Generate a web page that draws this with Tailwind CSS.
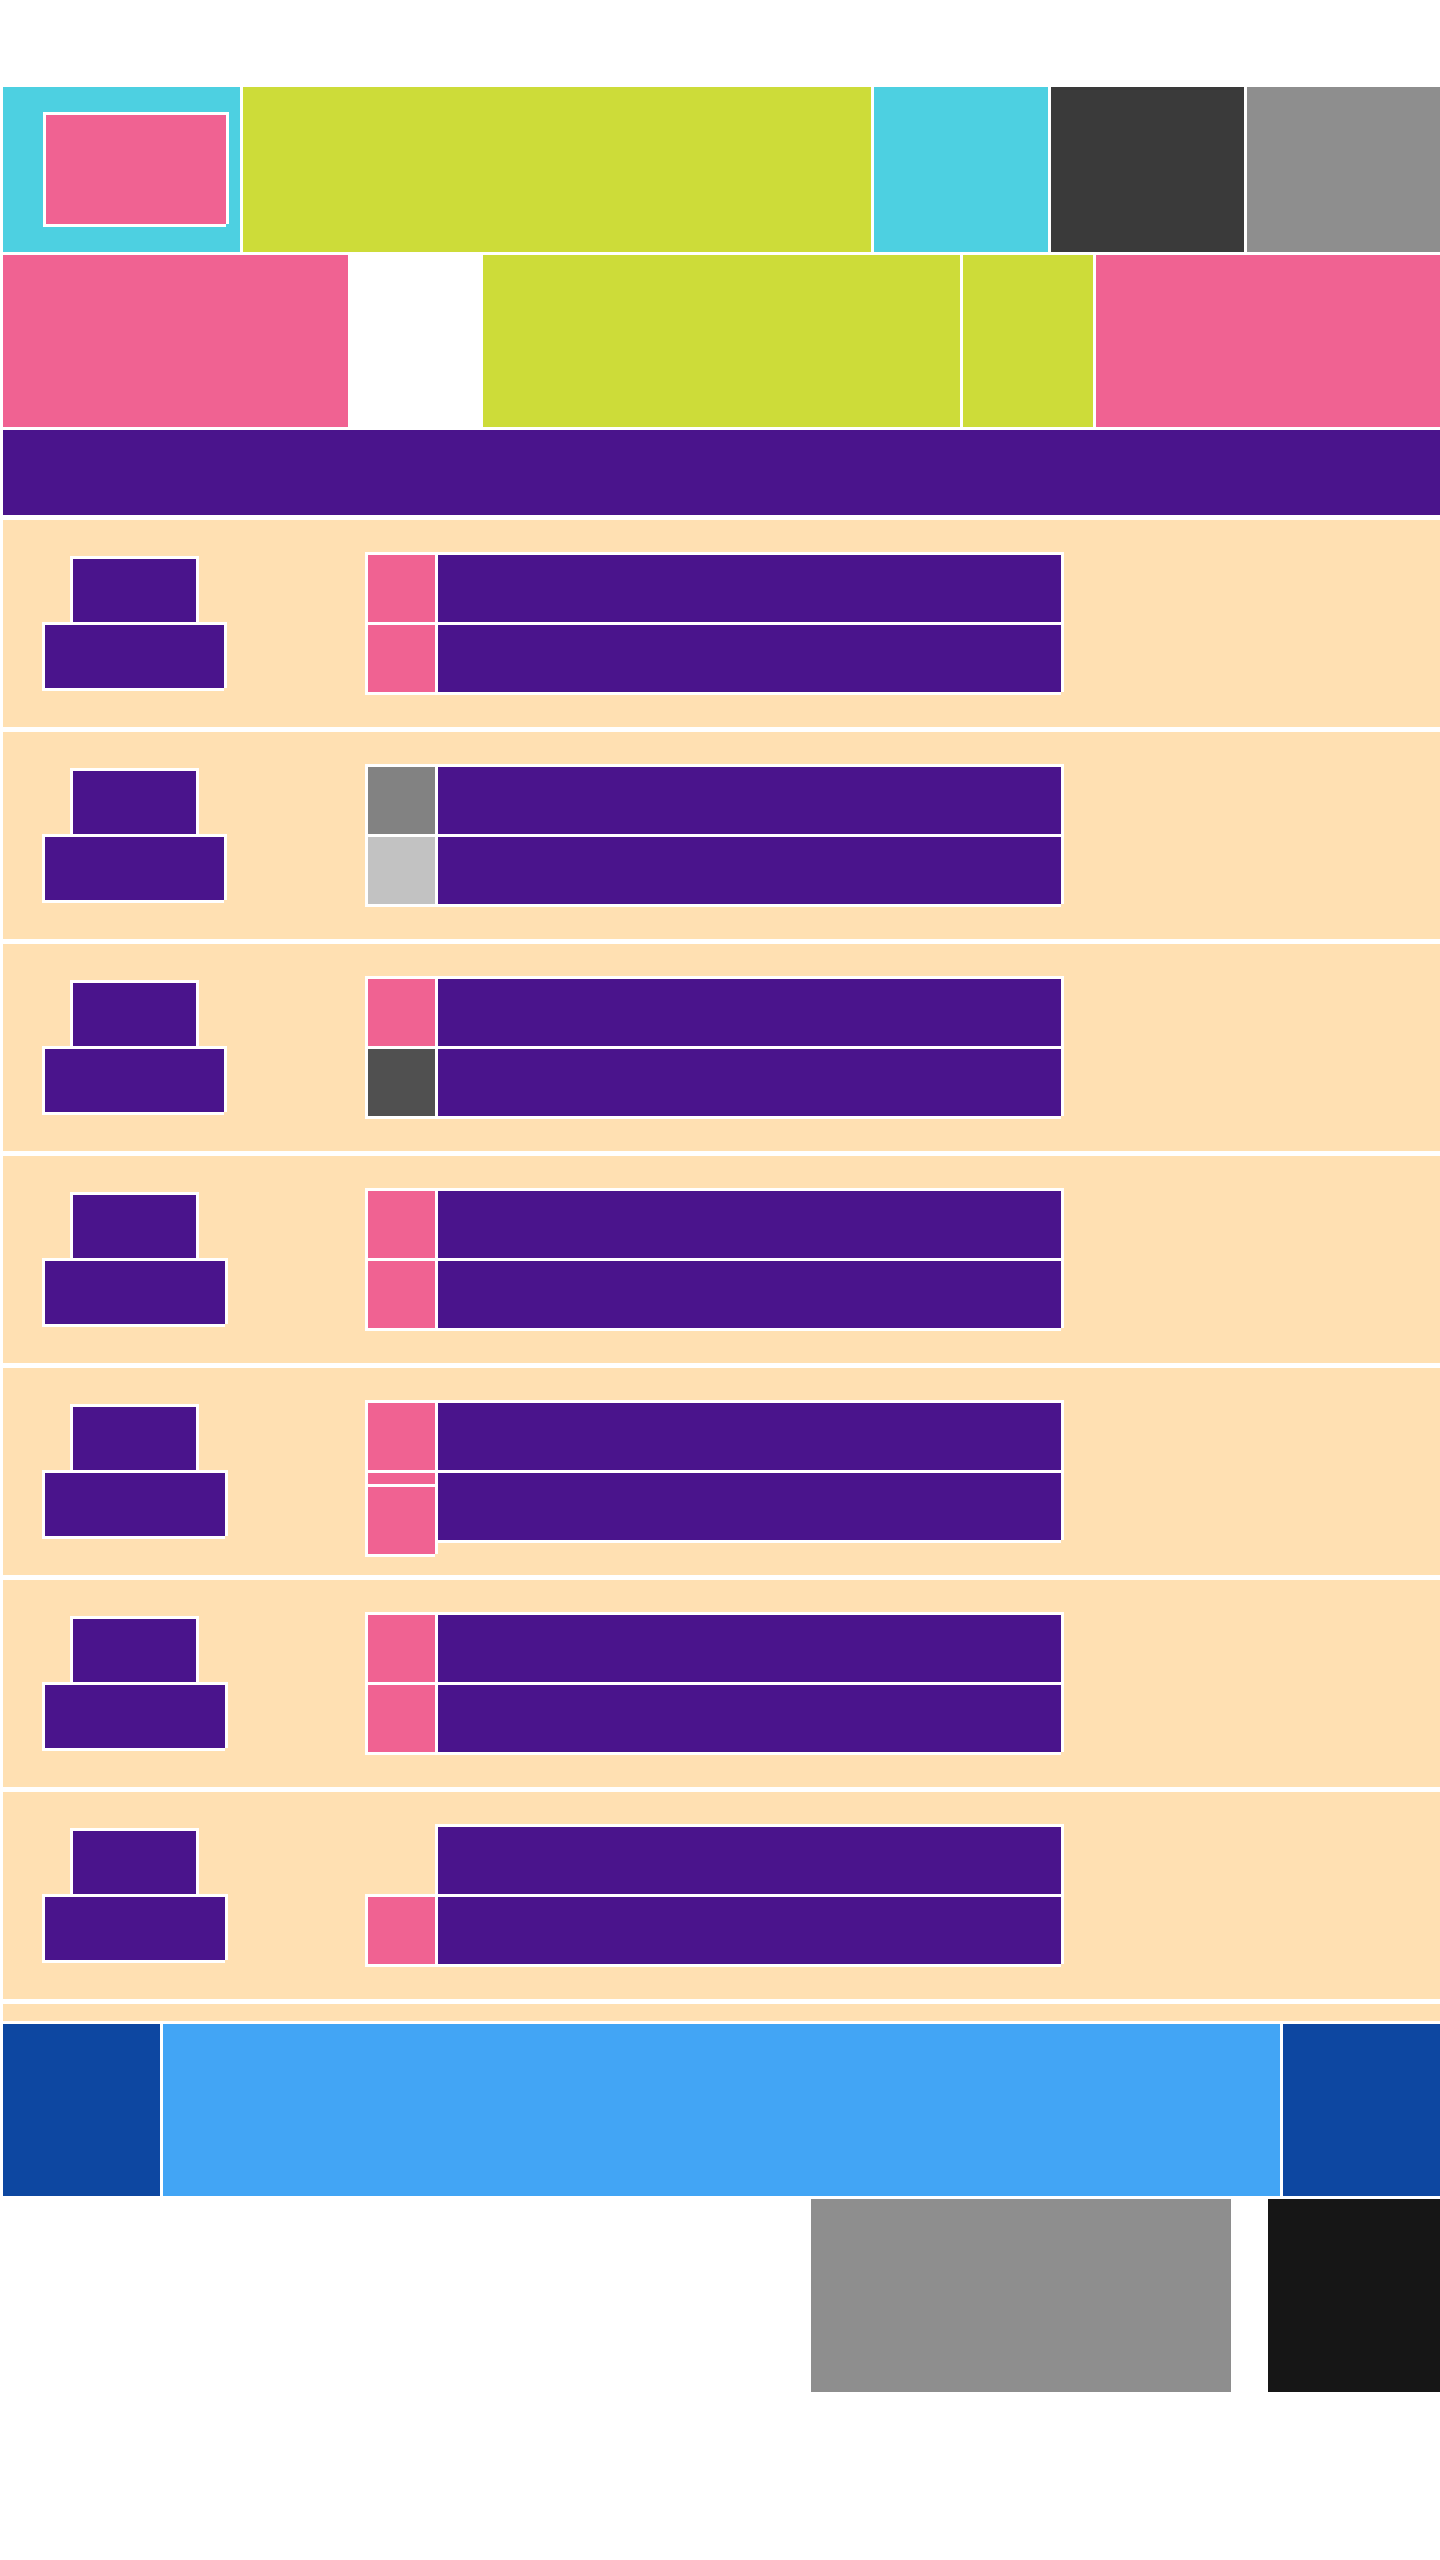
<!DOCTYPE html>
<html lang="en">
<head>
<meta charset="utf-8">
<meta name="viewport" content="width=device-width, initial-scale=1">
<title>Blocks</title>
<script src="https://cdn.jsdelivr.net/npm/@tailwindcss/browser@4"></script>
</head>
<body class="bg-white">
<div class="flex flex-col gap-[3px] pt-[87px] pl-[3px]">
  <!-- Top bar -->
  <header class="flex h-[165px] gap-[3px]">
    <div class="w-[237px] shrink-0 bg-[#4dd0e1] pt-7 pl-[43px]">
      <div class="h-[109px] w-[180px] bg-[#f06292] shadow-[-3px_-3px_#fff,3px_-3px_#fff,-3px_3px_#fff,3px_0_#fff,0_3px_#fff]"></div>
    </div>
    <div class="flex-1 bg-[#cddc39]"></div>
    <div class="w-[174px] bg-[#4dd0e1]"></div>
    <div class="w-[193px] bg-[#3a3a3a]"></div>
    <div class="w-[193px] bg-[#8e8e8e]"></div>
  </header>
  <!-- Second bar -->
  <nav class="flex h-[172px] gap-[3px]">
    <div class="w-[345px] bg-[#f06292]"></div>
    <div class="w-[129px] bg-white"></div>
    <div class="flex-1 bg-[#cddc39]"></div>
    <div class="w-[130px] bg-[#cddc39]"></div>
    <div class="w-[344px] bg-[#f06292]"></div>
  </nav>
  <!-- List -->
  <main class="flex flex-col gap-[5px]">
    <div class="h-[85px] bg-[#4a148c]"></div>
    <div id="rows" class="flex flex-col gap-[5px]"></div>
    <div class="h-[17px] bg-[#ffe0b2]"></div>
  </main>
  <!-- Pager -->
  <section class="flex h-[172px] gap-[3px]">
    <div class="w-[157px] bg-[#0d47a1]"></div>
    <div class="flex-1 bg-[#42a5f5]"></div>
    <div class="w-[157px] bg-[#0d47a1]"></div>
  </section>
  <footer class="flex h-[193px] justify-end gap-[37px]">
    <div class="w-[420px] bg-[#8e8e8e]"></div>
    <div class="w-[172px] bg-[#161616]"></div>
  </footer>
</div>
<script>
  const edge = 'shadow-[-3px_-3px_#fff,3px_-3px_#fff,-3px_3px_#fff,3px_0_#fff,0_3px_#fff]';
  const pink = 'h-[67px] bg-[#f06292]';
  const rows = [
    { label: 'w-[179px]', tiles: [pink, pink] },
    { label: 'w-[179px]', tiles: ['h-[67px] bg-[#828282]', 'h-[67px] bg-[#c2c2c2]'] },
    { label: 'w-[179px]', tiles: [pink, 'h-[67px] bg-[#505050]'] },
    { label: 'w-[180px]', tiles: [pink, pink] },
    { label: 'w-[180px]', tiles: [pink, 'h-[11px] bg-[#f06292]', 'h-[67px] bg-[#f06292] -mb-[14px]'] },
    { label: 'w-[180px]', tiles: [pink, pink] },
    { label: 'w-[180px]', tiles: [pink], end: true },
  ];
  document.getElementById('rows').innerHTML = rows.map(r => `
    <div class="flex items-center bg-[#ffe0b2] py-[35px] pl-[42px]">
      <div class="flex w-[323px] shrink-0 flex-col gap-[3px]">
        <div class="ml-7 h-[63px] w-[123px] bg-[#4a148c] ${edge}"></div>
        <div class="h-[63px] bg-[#4a148c] ${r.label} ${edge}"></div>
      </div>
      <div class="flex gap-[3px]">
        <div class="flex w-[67px] flex-col gap-[3px] ${r.end ? 'justify-end' : ''}">
          ${r.tiles.map(t => `<div class="${t} ${edge}"></div>`).join('')}
        </div>
        <div class="flex w-[623px] flex-col gap-[3px]">
          <div class="h-[67px] bg-[#4a148c] ${edge}"></div>
          <div class="h-[67px] bg-[#4a148c] ${edge}"></div>
        </div>
      </div>
    </div>`).join('');
</script>
</body>
</html>
